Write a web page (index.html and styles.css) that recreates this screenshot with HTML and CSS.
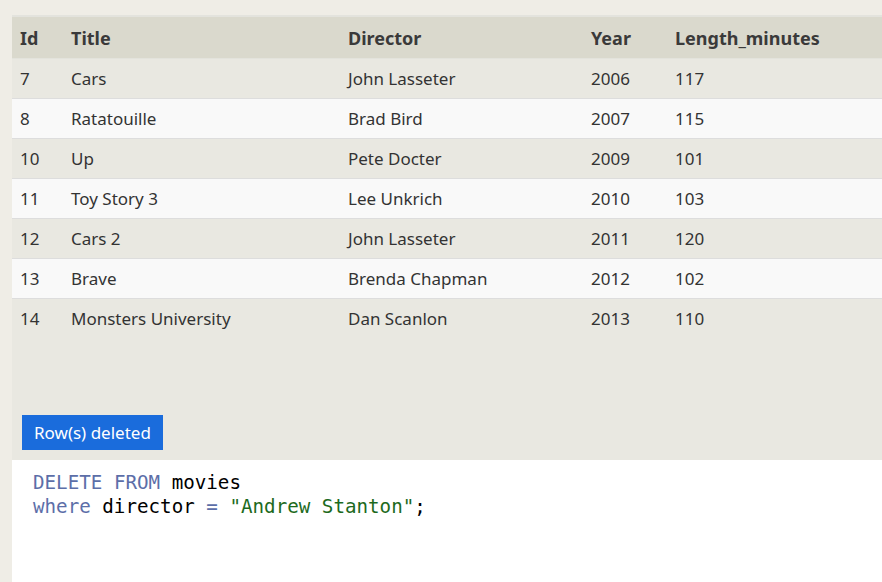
FILE: index.html
```html
<!DOCTYPE html>
<html>
<head>
<meta charset="utf-8">
<link rel="stylesheet" href="styles.css">
</head>
<body>
<div class="panel">
  <div class="results">
    <table class="grid">
      <thead>
        <tr><th class="c-id">Id</th><th class="c-title">Title</th><th class="c-dir">Director</th><th class="c-year">Year</th><th>Length_minutes</th></tr>
      </thead>
      <tbody>
        <tr><td>7</td><td>Cars</td><td>John Lasseter</td><td>2006</td><td>117</td></tr>
        <tr><td>8</td><td>Ratatouille</td><td>Brad Bird</td><td>2007</td><td>115</td></tr>
        <tr><td>10</td><td>Up</td><td>Pete Docter</td><td>2009</td><td>101</td></tr>
        <tr><td>11</td><td>Toy Story 3</td><td>Lee Unkrich</td><td>2010</td><td>103</td></tr>
        <tr><td>12</td><td>Cars 2</td><td>John Lasseter</td><td>2011</td><td>120</td></tr>
        <tr><td>13</td><td>Brave</td><td>Brenda Chapman</td><td>2012</td><td>102</td></tr>
        <tr><td>14</td><td>Monsters University</td><td>Dan Scanlon</td><td>2013</td><td>110</td></tr>
      </tbody>
    </table>
    <div class="status">Row(s) deleted</div>
  </div>
  <pre class="code"><span class="kw">DELETE</span> <span class="kw">FROM</span> movies
<span class="kw">where</span> director <span class="op">=</span> <span class="str">"Andrew Stanton"</span>;</pre>
</div>
</body>
</html>
```
FILE: styles.css
```css
html, body {
  margin: 0;
  padding: 0;
  background: #efede6;
  height: 100%;
  overflow: hidden;
}
.panel {
  margin: 15px 0 0 12px;
  font-family: "Noto Sans", "Open Sans", sans-serif;
  color: #333333;
}
.results {
  background: #e9e8e1;
  border-top: 2px solid #e3e3dd;
  height: 445px;
  display: flex;
  flex-direction: column;
  justify-content: space-between;
  box-sizing: border-box;
  padding-bottom: 10px;
}
.grid {
  width: 100%;
  border-collapse: collapse;
  font-size: 17px;
}
.grid th {
  background: #dad9cd;
  text-align: left;
  font-weight: 700;
  font-size: 18px;
  height: 41px;
  padding: 0 8px;
  color: #3a3a3a;
  border-bottom: 1px solid #e3e3dc;
}
.grid td {
  height: 39px;
  padding: 0 8px;
  border-bottom: 1px solid #dddddd;
}
.grid tbody tr:nth-child(even) td {
  background: #f9f9f9;
}
.grid tbody tr:last-child td {
  border-bottom: none;
}
.c-id { width: 35px; }
.c-title { width: 261px; }
.c-dir { width: 227px; }
.c-year { width: 68px; }
.status {
  align-self: flex-start;
  margin-left: 10px;
  background: #1a6cdc;
  color: #ffffff;
  font-size: 17px;
  height: 35px;
  line-height: 35px;
  padding: 0 12px;
}
.code {
  margin: 0;
  background: #ffffff;
  height: 111px;
  padding: 11px 21px 0;
  font-family: "DejaVu Sans Mono", "Liberation Mono", monospace;
  font-size: 19.2px;
  line-height: 24px;
  color: #000000;
}
.kw { color: #5c6ea8; }
.op { color: #5c6ea8; }
.str { color: #1d6a1d; }
```
